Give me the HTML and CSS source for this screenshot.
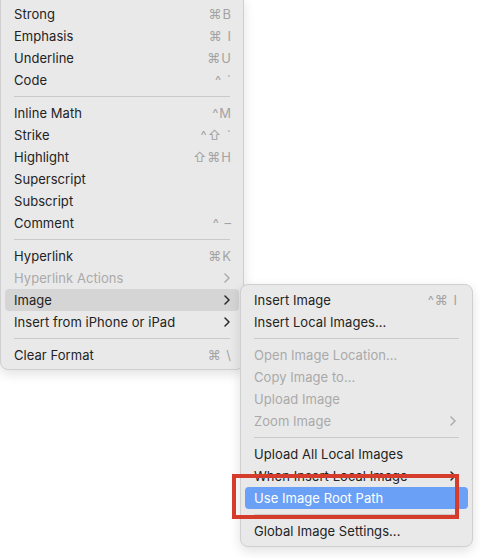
FILE: index.html
```html
<!DOCTYPE html>
<html>
<head>
<meta charset="utf-8">
<link rel="stylesheet" href="styles.css">
</head>
<body>
<div class="stage">
  <div class="menu main">
    <div class="item"><span class="label">Strong</span><span class="key">⌘B</span></div>
    <div class="item"><span class="label">Emphasis</span><span class="key">⌘ I</span></div>
    <div class="item"><span class="label">Underline</span><span class="key">⌘U</span></div>
    <div class="item"><span class="label">Code</span><span class="key">^ `</span></div>
    <div class="sep"></div>
    <div class="item"><span class="label">Inline Math</span><span class="key">^M</span></div>
    <div class="item"><span class="label">Strike</span><span class="key">^⇧ `</span></div>
    <div class="item"><span class="label">Highlight</span><span class="key">⇧⌘H</span></div>
    <div class="item"><span class="label">Superscript</span></div>
    <div class="item"><span class="label">Subscript</span></div>
    <div class="item"><span class="label">Comment</span><span class="key">^ –</span></div>
    <div class="sep"></div>
    <div class="item"><span class="label">Hyperlink</span><span class="key">⌘K</span></div>
    <div class="item disabled"><span class="label">Hyperlink Actions</span><svg class="chev" viewBox="0 0 6 10"><path d="M1 1 L5 5 L1 9"/></svg></div>
    <div class="item hover"><span class="label">Image</span><svg class="chev" viewBox="0 0 6 10"><path d="M1 1 L5 5 L1 9"/></svg></div>
    <div class="item"><span class="label">Insert from iPhone or iPad</span><svg class="chev" viewBox="0 0 6 10"><path d="M1 1 L5 5 L1 9"/></svg></div>
    <div class="sep"></div>
    <div class="item"><span class="label">Clear Format</span><span class="key">⌘ \</span></div>
  </div>

  <div class="menu sub">
    <div class="item"><span class="label">Insert Image</span><span class="key">^⌘ I</span></div>
    <div class="item"><span class="label">Insert Local Images...</span></div>
    <div class="sep"></div>
    <div class="item disabled"><span class="label">Open Image Location...</span></div>
    <div class="item disabled"><span class="label">Copy Image to...</span></div>
    <div class="item disabled"><span class="label">Upload Image</span></div>
    <div class="item disabled"><span class="label">Zoom Image</span><svg class="chev" viewBox="0 0 6 10"><path d="M1 1 L5 5 L1 9"/></svg></div>
    <div class="sep"></div>
    <div class="item"><span class="label">Upload All Local Images</span></div>
    <div class="item"><span class="label">When Insert Local Image</span><svg class="chev" viewBox="0 0 6 10"><path d="M1 1 L5 5 L1 9"/></svg></div>
    <div class="item selected"><span class="label">Use Image Root Path</span></div>
    <div class="sep"></div>
    <div class="item"><span class="label">Global Image Settings...</span></div>
  </div>

  <div class="annot"></div>
</div>
</body>
</html>
```

FILE: styles.css
```css
html, body {
  margin: 0;
  padding: 0;
  background: #ffffff;
}

body {
  width: 480px;
  height: 558px;
  overflow: hidden;
  font-family: Inter, "Liberation Sans", "DejaVu Sans", sans-serif;
  font-size: 13px;
  color: #232323;
}

.stage {
  position: relative;
  display: flow-root;
  width: 480px;
  height: 558px;
}

.menu {
  background: #e9e9e9;
  border: 1px solid #cfcfcf;
  border-radius: 8px;
  box-shadow: 0 4px 12px rgba(0, 0, 0, 0.12);
  padding: 4px 4px 3px 4px;
  box-sizing: border-box;
}

.main {
  width: 244px;
  margin-top: -2px;
  border-top-left-radius: 0;
  border-top-right-radius: 0;
}

.sub {
  position: absolute;
  left: 240px;
  top: 284px;
  width: 233px;
  padding-bottom: 4px;
}

.item {
  height: 22px;
  display: flex;
  align-items: center;
  justify-content: space-between;
  padding: 0 8px 0 9px;
  border-radius: 4px;
  white-space: nowrap;
}

.sub .item {
  padding-right: 11px;
}

.label {
  letter-spacing: 0.05px;
}

.key {
  color: #a3a3a3;
  font-family: Inter, "DejaVu Sans", sans-serif;
  font-size: 13px;
  letter-spacing: 1px;
  margin-right: -1px;
}

.item.disabled {
  color: #a9a9a9;
}

.item.hover {
  background: #d5d5d5;
}

.item.selected {
  background: #6aa1f7;
  color: #ffffff;
}

.chev {
  width: 6px;
  height: 10px;
  fill: none;
  stroke: #2a2a2a;
  stroke-width: 1.5;
  stroke-linecap: round;
  stroke-linejoin: round;
  margin-right: 1px;
}

.disabled .chev {
  stroke: #acacac;
}

.sep {
  height: 11px;
  display: flex;
  align-items: center;
  padding: 0 9px;
}

.sep::before {
  content: "";
  flex: 1;
  height: 1px;
  background: #c9c9c9;
}

.annot {
  position: absolute;
  left: 232px;
  top: 474px;
  width: 227px;
  height: 45px;
  box-sizing: border-box;
  border: 4px solid #d63c2b;
}
```
